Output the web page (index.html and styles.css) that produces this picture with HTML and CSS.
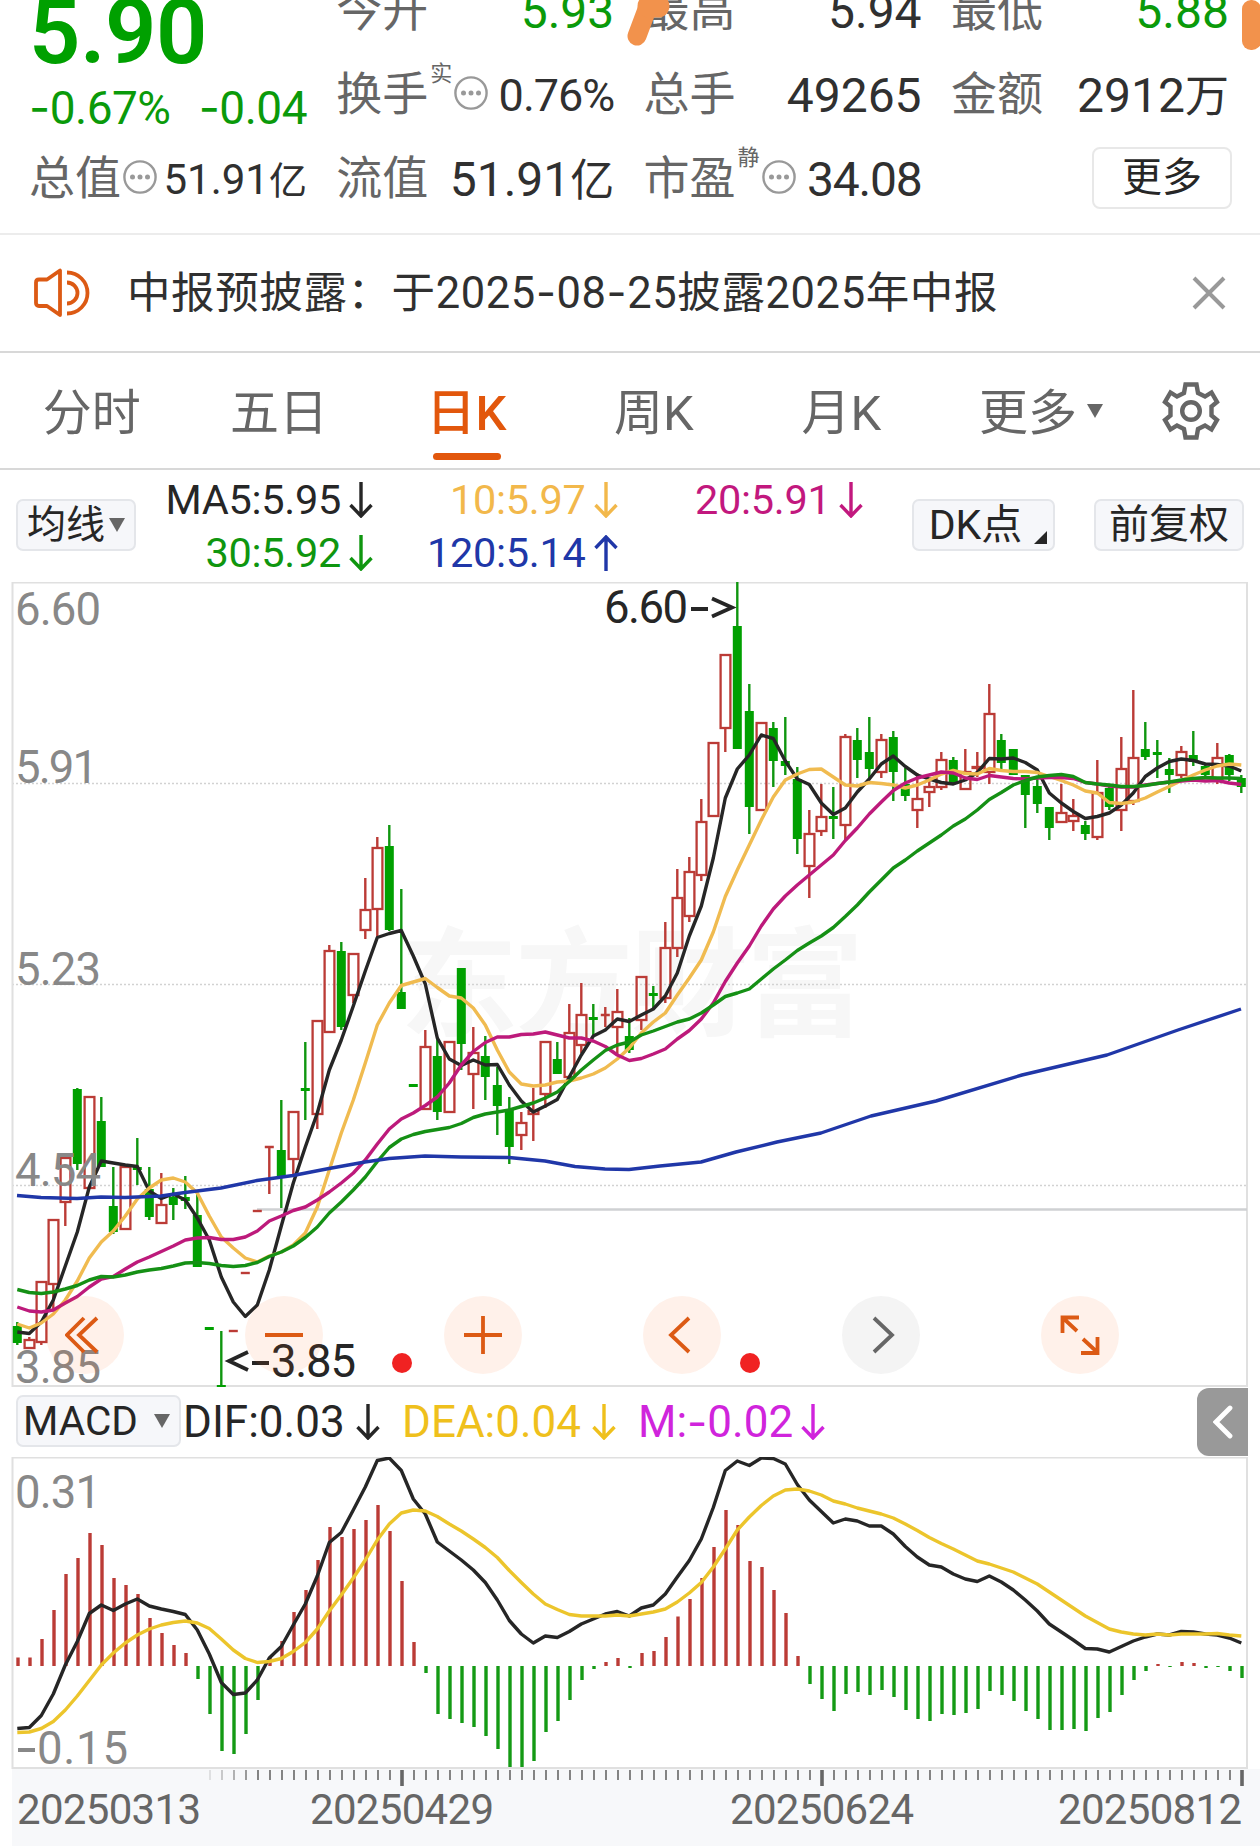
FILE: index.html
```html
<!DOCTYPE html>
<html lang="zh-CN">
<head>
    <meta charset="UTF-8">
    <title>日K行情</title>
    <link rel="stylesheet" href="styles.css">
</head>
<body>
    <svg class="symbols">
        <symbol id="dots" viewBox="0 0 34 34">
            <circle cx="17" cy="17" r="15.6" fill="none" stroke="#999" stroke-width="2.4"/>
            <circle cx="9.5" cy="17" r="2.5" fill="#999"/>
            <circle cx="17" cy="17" r="2.5" fill="#999"/>
            <circle cx="24.5" cy="17" r="2.5" fill="#999"/>
        </symbol>
        <symbol id="down" viewBox="0 0 24 36">
            <path d="M12 0V33M1.5 23L12 34L22.5 23" fill="none" stroke="currentColor" stroke-width="3.400"/>
        </symbol>
        <symbol id="up" viewBox="0 0 24 36">
            <path d="M12 36V3M1.5 13L12 2L22.5 13" fill="none" stroke="currentColor" stroke-width="3.400"/>
        </symbol>
    </svg>

    <!-- 行情 -->
    <div class="quote">
        <div class="price-box">
            <div class="price">5.90</div>
            <div class="change"><span><i class="dash">-</i>0.67%</span><span><i class="dash">-</i>0.04</span></div>
        </div>
        <div class="cell"><label>今开</label><b class="green">5.93</b></div>
        <div class="cell"><label>最高</label><b>5.94</b></div>
        <div class="cell"><label>最低</label><b class="green">5.88</b></div>
        <div class="cell"><label>换手</label><sup>实</sup><svg class="dots"><use href="#dots"/></svg><b class="mid">0.76%</b></div>
        <div class="cell"><label>总手</label><b>49265</b></div>
        <div class="cell"><label>金额</label><b>2912<em>万</em></b></div>
        <div class="cell"><label>总值</label><svg class="dots"><use href="#dots"/></svg><b class="small">51.91<em>亿</em></b></div>
        <div class="cell"><label>流值</label><b>51.91<em>亿</em></b></div>
        <div class="cell"><label>市盈</label><sup>静</sup><svg class="dots"><use href="#dots"/></svg><b class="pe">34.08</b></div>
        <div class="cell"><button class="more">更多</button></div>
        <svg class="marks" viewBox="0 0 1260 60">
            <path d="M637 36L649 4" stroke="#f2924c" stroke-width="19" stroke-linecap="round"/>
            <path d="M649 6H658" stroke="#f2924c" stroke-width="23" stroke-linecap="round"/>
            <rect x="1242" y="0" width="19" height="50" rx="9" fill="#f2924c"/>
        </svg>
    </div>

    <!-- 公告 -->
    <div class="notice">
        <svg class="speaker" viewBox="0 0 57 50" fill="none" stroke="#dc5a14" stroke-width="3.800">
            <path d="M6 11.500H14L27 2.500V47L14 38H6Q3 38 3 35V14.500Q3 11.500 6 11.500Z" stroke-linejoin="round"/>
            <path d="M34 14.500A10.500 10.500 0 0 1 34 35.500"/>
            <path d="M34 4.500A20.500 20.500 0 0 1 34 45.500"/>
        </svg>
        <span class="notice-text">中报预披露：于2025<i class="dash">-</i>08<i class="dash">-</i>25披露2025年中报</span>
        <svg class="close" viewBox="0 0 36 36"><path d="M3 3L33 33M33 3L3 33" stroke="#999" stroke-width="4"/></svg>
    </div>

    <!-- 周期 -->
    <div class="tabs">
        <div class="tab">分时</div>
        <div class="tab">五日</div>
        <div class="tab active">日K</div>
        <div class="tab">周K</div>
        <div class="tab">月K</div>
        <div class="tab tab-more">更多<span class="tri"></span></div>
        <svg class="gear" viewBox="-30 -30 60 60" fill="none" stroke="#666" stroke-width="4.400">
            <path d="M-5.500 -26.500H5.500L7 -18L14 -14.500L20.500 -18.500L26 -9L20.500 -4.500V4.500L26 9L20.500 18.500L14 14.500L7 18L5.500 26.500H-5.500L-7 18L-14 14.500L-20.500 18.500L-26 9L-20.500 4.500V-4.500L-26 -9L-20.500 -18.500L-14 -14.500L-7 -18Z"/>
            <circle r="8.800"/>
        </svg>
    </div>

    <!-- 均线 -->
    <div class="ma-bar">
        <button class="chip chip-ma">均线<span class="tri"></span></button>
        <div class="ma-list">
            <span class="c5">MA5:5.95<svg class="arrow"><use href="#down"/></svg></span>
            <span class="c10">10:5.97<svg class="arrow"><use href="#down"/></svg></span>
            <span class="c20">20:5.91<svg class="arrow"><use href="#down"/></svg></span>
            <span class="c30">30:5.92<svg class="arrow"><use href="#down"/></svg></span>
            <span class="c120">120:5.14<svg class="arrow"><use href="#up"/></svg></span>
        </div>
        <button class="chip chip-dk">DK点<span class="corner"></span></button>
        <button class="chip chip-fq">前复权</button>
    </div>

    <!-- K线 -->
    <div class="kline">
        <svg id="kline" viewBox="0 582 1260 805" width="1260" height="805">
            <text class="watermark" x="400" y="1027" textLength="464">东方财富</text>
            <g class="grid">
                <path d="M12 783.5H1247M12 984.500H1247M12 1185.500H1247"/>
            </g>
            <path class="frame" d="M12.500 582V1386H1247V582.500H12"/>
            <path d="M257 1209.500H1247" stroke="#cfd1d3" stroke-width="2.500"/>
            <g id="candles"></g>
            <g id="ma"></g>
            <g class="axis">
                <text x="15" y="625" textLength="86">6.60</text>
                <text x="15" y="783" textLength="83">5.91</text>
                <text x="15" y="985" textLength="86">5.23</text>
                <text x="15" y="1186" textLength="86">4.54</text>
                <text x="15" y="1383" textLength="86">3.85</text>
            </g>
            <g class="peak">
                <text x="604" y="623" textLength="84">6.60</text>
                <path d="M691 609H708M712 598.500L732 607.500L712 616.500"/>
                <text x="271" y="1377" textLength="85">3.85</text>
                <path d="M248 1352L229 1361L248 1370M252 1363H269"/>
            </g>
            <circle cx="402" cy="1363" r="10" fill="#f02222"/>
            <circle cx="750" cy="1363" r="10" fill="#f02222"/>
        </svg>
        <div class="tools">
            <span class="tool"><svg viewBox="-20 -20 40 40"><path d="M-1 -17L-18 0L-1 17M12 -17L-6 0L12 17"/></svg></span>
            <span class="tool"><svg viewBox="-20 -20 40 40"><path d="M-19 0H19"/></svg></span>
            <span class="tool"><svg viewBox="-20 -20 40 40"><path d="M-19 0H19M0 -19V19"/></svg></span>
            <span class="tool"><svg viewBox="-20 -20 40 40"><path d="M7 -17L-11 0L7 17"/></svg></span>
            <span class="tool off"><svg viewBox="-20 -20 40 40"><path d="M-7 -17L11 0L-7 17"/></svg></span>
            <span class="tool"><svg viewBox="-20 -20 40 40"><path d="M-17.500 -2V-17.500H-1M-17 -17L-3 -4M17.500 2V18H1M17 17L3 4"/></svg></span>
        </div>
    </div>

    <!-- MACD -->
    <div class="macd-bar">
        <button class="chip chip-macd">MACD<span class="tri"></span></button>
        <span class="dif">DIF:0.03<svg class="arrow"><use href="#down"/></svg></span>
        <span class="dea">DEA:0.04<svg class="arrow"><use href="#down"/></svg></span>
        <span class="m">M:<i class="dash">-</i>0.02<svg class="arrow"><use href="#down"/></svg></span>
        <div class="fold"><svg viewBox="0 0 20 32"><path d="M17 2L3 16L17 30"/></svg></div>
    </div>
    <svg id="macd" viewBox="0 1457 1260 389" width="1260" height="389">
        <rect x="12" y="1769" width="1248" height="77" fill="#f7f8fa"/>
        <path class="frame" d="M12.500 1457V1768H1247V1457.500H12"/>
        <g id="bars"></g>
        <g id="lines"></g>
        <g class="axis">
            <text x="15" y="1508" textLength="86">0.31</text>
            <path d="M18 1750H35" stroke="#888" stroke-width="4"/>
            <text x="37" y="1764" textLength="91">0.15</text>
        </g>
        <g id="ticks"></g>
        <g class="dates">
            <text x="17" y="1824" textLength="184">20250313</text>
            <text x="310" y="1824" textLength="184">20250429</text>
            <text x="730" y="1824" textLength="184">20250624</text>
            <text x="1058" y="1824" textLength="184">20250812</text>
        </g>
    </svg>

    <script src="chart.js"></script>
</body>
</html>
```

FILE: styles.css
```css
body {
    margin: 0;
    width: 1260px;
    height: 1846px;
    overflow: hidden;
    background: #fff;
    color: #303030;
    font-family: Roboto, "Noto Sans CJK SC", sans-serif;
}

button {
    font-family: inherit;
    color: #262626;
    padding: 0;
}

.symbols {
    display: none;
}

/* 横杠用更宽的字形 */
.dash {
    font-family: Inter, sans-serif;
    font-style: normal;
}

.green {
    color: #0a9a0a;
}

/* 行情 */
.quote {
    position: relative;
    box-sizing: border-box;
    height: 235px;
    padding: 0 31px 0 29px;
    border-bottom: 2px solid #ececec;
    overflow: hidden;
    display: grid;
    grid-template-columns: repeat(4, 278px);
    grid-template-rows: 54px 84px 84px;
    column-gap: 29.3px;
}

.price-box {
    grid-row: 1 / 3;
    color: #0a9a0a;
    display: flex;
    flex-direction: column;
    justify-content: flex-end;
}

.price {
    height: 88px;
    margin-top: -20px;
    line-height: 88px;
    font-size: 90px;
    font-weight: 600;
    color: #00a000;
    letter-spacing: -0.5px;
}

.change {
    height: 61px;
    line-height: 61px;
    display: flex;
    justify-content: space-between;
    font-size: 46px;
    letter-spacing: -0.5px;
}

.cell {
    display: flex;
    align-items: center;
    height: 84px;
    align-self: end;
    white-space: nowrap;
}

.cell label {
    font-size: 46px;
    line-height: 84px;
    color: #666;
    position: relative;
    top: -2px;
}

.cell sup {
    font-size: 22px;
    line-height: 24px;
    align-self: flex-start;
    margin: 8px 0 0 2px;
    color: #666;
}

.cell b {
    margin-left: auto;
    font-size: 48px;
    line-height: 84px;
    font-weight: 400;
}

.cell b em {
    font-style: normal;
    font-size: 44px;
}

.cell .mid {
    font-size: 45px;
    letter-spacing: -1px;
}

.cell .pe {
    letter-spacing: -1.2px;
}

.cell .small {
    font-size: 42px;
}

.cell .small em {
    font-size: 38px;
}

.dots {
    width: 34px;
    height: 34px;
    margin-left: 2px;
    position: relative;
    top: -3px;
}

.more {
    margin-left: auto;
    margin-right: -3px;
    width: 140px;
    height: 62px;
    position: relative;
    top: -2px;
    font-size: 40px;
    line-height: 54px;
    background: #fff;
    border: 2px solid #e8e8e8;
    border-radius: 8px;
}

.marks {
    position: absolute;
    left: 0;
    top: 0;
    width: 1260px;
    height: 60px;
}

/* 公告 */
.notice {
    box-sizing: border-box;
    height: 118px;
    padding: 0 33px;
    border-bottom: 2px solid #d8d8d8;
    display: flex;
    align-items: center;
}

.speaker {
    width: 57px;
    height: 50px;
}

.notice-text {
    margin-left: 37px;
    font-size: 43.5px;
    line-height: 100px;
    letter-spacing: 0.6px;
}

.close {
    width: 36px;
    height: 36px;
    margin-left: auto;
}

/* 周期 */
.tabs {
    box-sizing: border-box;
    height: 117px;
    border-bottom: 2px solid #d8d8d8;
    display: flex;
    align-items: center;
    color: #666;
}

.tab {
    position: relative;
    left: -2px;
    width: 187.4px;
    height: 115px;
    line-height: 121px;
    text-align: center;
    font-size: 49px;
}

.tab.active {
    color: #e2570c;
    font-weight: 500;
}

.tab.active::after {
    content: '';
    position: absolute;
    left: 60px;
    bottom: 8px;
    width: 68px;
    height: 7px;
    border-radius: 4px;
    background: #e2570c;
}

.tab-more {
    width: 212px;
}

.tri {
    display: inline-block;
    border: 8.5px solid transparent;
    border-top: 14px solid #666;
    border-bottom: 0;
    vertical-align: middle;
    position: relative;
    top: -3px;
}

.tab-more .tri {
    margin-left: 10px;
    top: -6px;
}

.gear {
    width: 60px;
    height: 60px;
    margin-left: 12px;
}

/* 均线 */
.ma-bar {
    height: 112px;
    padding: 0 16px;
    display: flex;
    align-items: center;
}

.chip {
    box-sizing: border-box;
    height: 52px;
    background: #f6f7fa;
    border: 2px solid #e4e6ea;
    border-radius: 7px;
    font-size: 39px;
    line-height: 46px;
    white-space: nowrap;
    position: relative;
    top: -1px;
    flex: none;
}

.chip-ma {
    width: 120px;
}

.chip-ma .tri {
    margin-left: 4px;
}

.ma-list {
    width: 728px;
    display: grid;
    grid-template-columns: 237px 244.5px 245px;
    grid-auto-rows: 53px;
    font-size: 41.5px;
    line-height: 53px;
}

.ma-list span {
    display: flex;
    justify-content: flex-end;
    align-items: center;
    letter-spacing: -0.3px;
}

.arrow {
    width: 24px;
    height: 36px;
    margin-left: 8px;
}

.c5 { color: #262626; }
.c10 { color: #f2b84b; }
.c20 { color: #c2187e; }
.c30 { color: #0f960f; }
.c120 { color: #2037a8; }

.chip-dk {
    width: 143px;
    margin-left: 48px;
    padding-right: 16px;
    font-size: 41px;
}

.corner {
    position: absolute;
    right: 6px;
    bottom: 5px;
    border-left: 13px solid transparent;
    border-bottom: 13px solid #262626;
}

.chip-fq {
    width: 150px;
    margin-left: auto;
    font-size: 40px;
}

/* K线 */
.kline {
    position: relative;
    height: 804px;
}

.kline > svg, #macd {
    display: block;
}

.frame {
    fill: none;
    stroke: #e0e0e0;
    stroke-width: 2;
}

.grid path {
    stroke: #d2d2d2;
    stroke-width: 1.3;
    stroke-dasharray: 2 2;
}

.watermark {
    font-size: 118px;
    font-weight: 700;
    fill: #f7f7f7;
}

.axis text {
    font-size: 45.5px;
    fill: #888;
}

.peak text {
    font-size: 45.5px;
    fill: #262626;
}

.peak path {
    fill: none;
    stroke: #262626;
    stroke-width: 3.8;
}

.dates text {
    font-size: 42px;
    fill: #666;
}

.tools {
    position: absolute;
    left: 46px;
    top: 714px;
    display: flex;
    gap: 121px;
}

.tool {
    width: 78px;
    height: 78px;
    border-radius: 50%;
    background: rgba(250, 100, 20, 0.09);
    display: flex;
    align-items: center;
    justify-content: center;
}

.tool svg {
    width: 40px;
    height: 40px;
    fill: none;
    stroke: #dc5a14;
    stroke-width: 3.8;
}

.tool.off {
    background: rgba(60, 60, 60, 0.06);
}

.tool.off svg {
    stroke: #666;
}

/* MACD */
.macd-bar {
    height: 71px;
    padding-left: 16px;
    display: flex;
    align-items: center;
    font-size: 44px;
}

.macd-bar > span {
    display: flex;
    align-items: center;
    line-height: 60px;
}

.chip-macd {
    width: 165px;
    font-size: 40.5px;
    padding-right: 4px;
}

.chip-macd .tri {
    margin-left: 16px;
}

.dif { margin-left: 2px; width: 219px; color: #262626; }
.dea { width: 236px; color: #efc01c; }
.m { color: #d024dc; }

.macd-bar .arrow {
    margin-left: 11px;
}

.macd-bar .m .arrow {
    margin-left: 8px;
}

.fold {
    width: 51px;
    height: 68px;
    margin-left: auto;
    margin-right: 12px;
    border-radius: 12px 0 0 12px;
    background: #999;
    display: flex;
    align-items: center;
    justify-content: center;
}

.fold svg {
    width: 20px;
    height: 34px;
    fill: none;
    stroke: #fff;
    stroke-width: 4.8;
    stroke-linecap: round;
}
```

FILE: chart.js
```js
const RED = '#bb3b36';
const GREEN = '#00a000';
const X0 = 17.3;
const STEP = 12;
const ZERO = 1666;

// 涨跌, 最高, 实体上沿, 实体下沿, 最低
const candles = [
    ['g', 1322, 1326, 1343, 1345], ['r', 1337, 1339, 1349, 1349], ['r', 1281, 1281, 1343, 1345],
    ['r', 1219, 1219, 1285, 1310], ['r', 1157, 1157, 1203, 1226], ['g', 1088, 1089, 1164, 1170],
    ['r', 1096, 1096, 1189, 1189], ['g', 1097, 1121, 1167, 1167], ['g', 1167, 1206, 1232, 1234],
    ['r', 1166, 1166, 1230, 1230], ['g', 1138, 1167, 1170, 1185], ['g', 1167, 1189, 1217, 1220],
    ['r', 1173, 1204, 1224, 1224], ['g', 1188, 1197, 1205, 1220], ['g', 1176, 1197, 1201, 1209],
    ['g', 1193, 1215, 1267, 1267], ['g', 1328, 1327, 1330, 1329], ['g', 1331, 1385, 1387, 1386],
    ['r', 1331, 1331, 1331, 1331], ['r', 1273, 1273, 1273, 1273], ['r', 1211, 1211, 1211, 1211],
    ['r', 1147, 1147, 1147, 1194], ['g', 1100, 1150, 1177, 1208], ['r', 1111, 1111, 1160, 1176],
    ['g', 1042, 1088, 1091, 1120], ['r', 1020, 1020, 1115, 1129], ['r', 945, 950, 1033, 1033],
    ['g', 942, 951, 1027, 1030], ['r', 953, 953, 996, 1003], ['r', 878, 909, 931, 939],
    ['r', 837, 847, 910, 938], ['g', 825, 846, 930, 931], ['g', 889, 992, 1009, 1009],
    ['g', 1085, 1084, 1087, 1086], ['r', 1030, 1046, 1110, 1110], ['g', 1037, 1056, 1112, 1120],
    ['r', 1041, 1041, 1113, 1113], ['g', 968, 968, 1044, 1070], ['r', 1027, 1052, 1075, 1109],
    ['g', 1036, 1056, 1077, 1100], ['g', 1067, 1085, 1106, 1135], ['g', 1097, 1109, 1147, 1164],
    ['r', 1112, 1122, 1136, 1150], ['r', 1088, 1110, 1115, 1141], ['r', 1041, 1041, 1095, 1108],
    ['g', 1042, 1059, 1074, 1074], ['r', 1004, 1032, 1078, 1079], ['r', 983, 1014, 1046, 1053],
    ['g', 1004, 1017, 1020, 1036], ['r', 1007, 1015, 1015, 1027], ['r', 989, 1011, 1028, 1054],
    ['g', 1018, 1036, 1050, 1053], ['r', 976, 976, 1021, 1030], ['g', 986, 993, 996, 1010],
    ['r', 922, 947, 999, 1003], ['r', 869, 897, 949, 957], ['r', 857, 871, 917, 922],
    ['r', 799, 821, 876, 881], ['r', 742, 742, 817, 817], ['r', 654, 654, 729, 752],
    ['g', 582, 626, 749, 749], ['g', 684, 711, 807, 834], ['r', 722, 722, 811, 811],
    ['g', 722, 728, 761, 787], ['g', 717, 761, 766, 775], ['g', 767, 779, 839, 854],
    ['r', 810, 833, 867, 898], ['r', 784, 816, 832, 836], ['g', 787, 816, 819, 839],
    ['r', 734, 736, 826, 840], ['g', 728, 740, 760, 778], ['g', 717, 752, 769, 778],
    ['r', 734, 739, 773, 778], ['g', 731, 737, 772, 801], ['g', 768, 784, 796, 801],
    ['r', 773, 798, 811, 828], ['r', 778, 786, 793, 807], ['r', 752, 759, 788, 790],
    ['g', 757, 760, 782, 785], ['r', 749, 771, 790, 790], ['r', 752, 766, 769, 777],
    ['r', 684, 713, 773, 784], ['g', 734, 740, 763, 771], ['g', 749, 749, 775, 775],
    ['g', 775, 775, 795, 828], ['g', 777, 786, 804, 813], ['g', 807, 807, 828, 840],
    ['r', 784, 812, 823, 823], ['r', 799, 815, 822, 831], ['g', 821, 825, 834, 840],
    ['r', 760, 792, 838, 840], ['g', 787, 788, 807, 810], ['r', 737, 768, 811, 831],
    ['r', 690, 757, 802, 805], ['g', 722, 749, 757, 760], ['g', 740, 752, 755, 778],
    ['g', 758, 769, 775, 793], ['r', 746, 751, 776, 778], ['g', 731, 755, 762, 766],
    ['g', 764, 766, 775, 777], ['r', 743, 757, 780, 784], ['g', 754, 755, 775, 781],
    ['g', 775, 778, 787, 793]
];

const ma5 = [1332, 1333.5, 1322, 1300, 1266, 1232, 1187, 1161, 1163, 1165, 1166.5, 1191, 1198.5, 1194, 1200, 1218, 1240, 1277, 1302, 1316.5, 1305, 1270, 1226, 1183, 1147, 1113, 1070, 1040, 1006, 971, 937.5, 933.5, 930.5, 956, 984, 1038, 1059, 1065.5, 1060, 1065, 1064.5, 1085, 1101, 1112, 1106, 1099.5, 1077, 1055, 1036, 1030, 1019, 1021.5, 1015, 1009, 996, 973, 936, 906, 858, 798, 769, 755, 735, 738.5, 761, 779, 784.5, 803, 814.5, 808, 792, 779, 764, 756, 766.5, 775, 779, 782.5, 784, 780, 772.5, 758.5, 759, 758, 762.5, 770, 793, 803, 811.5, 818.5, 816.5, 813, 805, 793, 776.5, 768, 761.5, 759, 760.5, 764, 764.5, 766, 771];
const ma10 = [1324, 1328, 1323, 1314, 1300, 1281, 1258, 1242, 1231, 1216, 1199, 1188, 1180, 1178, 1182, 1193, 1216, 1237, 1248, 1258, 1262, 1256, 1252, 1245, 1233, 1207, 1170, 1133, 1100, 1063, 1025, 1003, 985.5, 982, 978.5, 987.5, 996, 998, 1008, 1025, 1050, 1072, 1084, 1086, 1085, 1082, 1081, 1078, 1074, 1068, 1059, 1048, 1033, 1022, 1013, 995, 978, 960, 932, 896.5, 870, 845, 820, 797, 780, 774, 769.5, 769, 777, 785, 786, 782.5, 783.5, 785, 788, 785, 780, 774, 770.5, 773.5, 774, 768.5, 770.5, 771.5, 771.5, 772.5, 776.5, 780.5, 785, 791, 793, 802.5, 803.5, 802, 798, 792, 786.5, 780.5, 775, 770, 766, 764, 765];
const ma20 = [1307, 1311, 1312, 1310, 1303, 1296.5, 1287, 1279, 1276.5, 1269, 1262, 1257, 1251.5, 1246, 1240, 1238, 1237.5, 1239.5, 1239.5, 1237, 1231, 1221, 1216, 1210.5, 1207, 1200, 1192, 1183, 1173, 1160, 1144, 1129, 1119, 1113, 1105.5, 1097, 1083, 1065, 1051.5, 1042.5, 1037, 1037, 1034.5, 1034, 1032, 1035, 1038, 1038, 1041, 1046.5, 1055, 1060.5, 1058.5, 1054, 1049, 1039, 1030.5, 1019, 1003, 981.5, 963, 946, 926, 909, 896, 885, 875, 865, 855, 840.5, 828, 814, 802, 790.5, 783, 778, 775, 772, 773, 778, 779.5, 775.5, 777, 778.5, 779, 778, 777.5, 777.5, 778.5, 782.5, 784, 786, 787, 787, 785, 783.5, 782, 781, 780, 781, 780.5, 783, 784.5];
const ma30 = [1289.5, 1292.5, 1293.5, 1292, 1289, 1285.5, 1280, 1276.5, 1277, 1275, 1272, 1270, 1268.5, 1266, 1263, 1262.5, 1263.5, 1265.5, 1266.5, 1265.5, 1262.5, 1256.5, 1252, 1246, 1237.5, 1227, 1213, 1202, 1190, 1177, 1161.5, 1147.5, 1139, 1134.5, 1131.5, 1129.5, 1127.5, 1123.5, 1117.5, 1114, 1112, 1110, 1106.5, 1103, 1098, 1092, 1081.5, 1070, 1060, 1050.5, 1045, 1042, 1035, 1031, 1026.5, 1022, 1019, 1013, 1005, 996.5, 993, 989, 979, 969, 960, 950.5, 943, 936, 927.5, 916.5, 905, 892, 880, 868, 860, 851, 843, 835, 826, 819, 810, 799.5, 792.5, 785, 780.5, 777, 775.5, 774.5, 776.5, 782.5, 784, 785, 786.5, 786.5, 785.5, 783.5, 782, 780, 778.5, 777.5, 778, 778, 778.5];
const ma120 = '17,1195.5 41,1197.5 77,1198.5 101,1197 125,1197.5 161,1196 185,1192.5 221,1188 257,1180.5 293,1175.5 329,1168.5 365,1162 389,1158.5 425,1156 461,1157 509,1157.5 545,1161 575,1166.5 605,1169 629,1169.5 660,1166 701,1162 736,1152 777,1142 821,1133 871,1116 936,1101 1022,1075 1107,1055 1178,1030 1241,1009';

const hist = [1657.5, 1657.5, 1639, 1610, 1574, 1558, 1533, 1545, 1578, 1585, 1594, 1618, 1633, 1645, 1653, 1679, 1714, 1751, 1754, 1734, 1700, 1657.5, 1641, 1612, 1590, 1560, 1527, 1537, 1529, 1520, 1505, 1531, 1581, 1642, 1673, 1714, 1719, 1723, 1727, 1736, 1749, 1767, 1767, 1761, 1732, 1721, 1700, 1680, 1669, 1662, 1658, 1668, 1653, 1651, 1637, 1616.5, 1599, 1578, 1547, 1510, 1525, 1561, 1567, 1590, 1613, 1656, 1684, 1699, 1711, 1694, 1692, 1695, 1690, 1697, 1710, 1719, 1721, 1714, 1715, 1713, 1709, 1691, 1695, 1701, 1711, 1719, 1730, 1730, 1729, 1731, 1718, 1712, 1695, 1680, 1671, 1664, 1667, 1662, 1663, 1668, 1667, 1671, 1678];
const dif = [1728.5, 1727.5, 1715.5, 1694, 1665, 1641.5, 1613.5, 1605, 1610.5, 1604, 1599, 1606, 1609, 1611.5, 1614.5, 1630, 1654, 1682.5, 1694.5, 1693, 1680, 1658, 1646.5, 1625, 1604, 1576, 1542.5, 1532.5, 1510, 1487, 1460.5, 1458, 1470.5, 1499, 1514, 1542, 1551, 1560, 1570, 1582.5, 1600, 1620.5, 1634, 1643, 1636, 1637.5, 1631.5, 1624, 1619, 1614, 1611.5, 1616, 1608, 1605, 1594, 1577, 1560.5, 1539, 1507.5, 1470.5, 1461, 1465.5, 1458, 1458.5, 1464, 1484.5, 1500, 1511.5, 1523, 1519, 1521, 1526, 1526, 1534, 1546.5, 1557, 1565, 1567, 1574, 1579, 1581.5, 1576, 1582, 1590, 1600, 1611, 1624, 1632, 1640, 1648.5, 1649, 1652, 1646.5, 1641, 1637, 1634, 1635, 1631.5, 1632, 1634, 1635, 1638, 1643];
const dea = [1732.5, 1732, 1728.5, 1721.5, 1710, 1696, 1680.5, 1665, 1653, 1643, 1635, 1629, 1625, 1622.5, 1621, 1623, 1628.5, 1639, 1650, 1658.5, 1662.5, 1661.5, 1658.5, 1651.5, 1642.5, 1629, 1611, 1595, 1578, 1560, 1540, 1524, 1513, 1510, 1511, 1516.5, 1524, 1531, 1539, 1547.5, 1557.5, 1570.5, 1582.5, 1594, 1604, 1609.5, 1614.5, 1616, 1616, 1616, 1615, 1616, 1614, 1612, 1609, 1602, 1593, 1582.5, 1567, 1549, 1530, 1517, 1505.5, 1496, 1490, 1489, 1491, 1495, 1501, 1504, 1508, 1511, 1514, 1518, 1524, 1530.5, 1537.5, 1543.5, 1549, 1555, 1561, 1564, 1568, 1572, 1578, 1584, 1592, 1600, 1608, 1616, 1622.5, 1629, 1632, 1634, 1635, 1634, 1635, 1634, 1634, 1634, 1633.5, 1635, 1636];

function x(i) {
    return +(X0 + i * STEP).toFixed(1);
}

function line(ys, color, width) {
    const pts = typeof ys === 'string' ? ys : ys.map((y, i) => x(i) + ',' + y).join(' ');
    return `<polyline points="${pts}" fill="none" stroke="${color}" stroke-width="${width}" stroke-linejoin="round"/>`;
}

function candle([type, high, top, bottom, low], i) {
    const cx = x(i);
    if (type === 'g') {
        return `<path d="M${cx} ${high}V${low}" stroke="#0f960f" stroke-width="2.4"/>` +
            `<rect x="${cx - 4.5}" y="${top}" width="9" height="${bottom - top}" fill="${GREEN}"/>`;
    }
    // 一字或T字
    if (top === bottom) {
        return `<path d="M${cx - 4.5} ${top}H${cx + 4.5}M${cx} ${high}V${low}" stroke="${RED}" stroke-width="2.4"/>`;
    }
    return `<path d="M${cx} ${high}V${top}M${cx} ${bottom}V${low}" stroke="${RED}" stroke-width="2.4"/>` +
        `<rect x="${cx - 4.7}" y="${top + 1}" width="9.8" height="${bottom - top - 2}" fill="none" stroke="${RED}" stroke-width="2.3"/>`;
}

document.getElementById('candles').innerHTML = candles.map(candle).join('');
document.getElementById('ma').innerHTML =
    line(ma5, '#262626', 3.4) +
    line(ma10, '#f0bb50', 3.4) +
    line(ma20, '#bd1a7b', 3.4) +
    line(ma30, '#159015', 3.4) +
    line(ma120, '#2037a8', 3.4);

document.getElementById('bars').innerHTML = hist.map((y, i) =>
    `<path d="M${x(i) + 0.7} ${ZERO}V${y}" stroke="${y < ZERO ? '#bb3b36' : '#149a14'}" stroke-width="3.4"/>`
).join('');
document.getElementById('lines').innerHTML = line(dif, '#262626', 3.4) + line(dea, '#ecc52c', 3.4);

// 时间轴刻度
let ticks = '';
for (let i = 16; i <= 102; i++) {
    const major = i === 32 || i === 67 || i === 102;
    ticks += `<path d="M${x(i) + 0.7} 1770V${major ? 1786 : 1780}" stroke="#666" stroke-width="${major ? 3.6 : 1.6}" opacity="${Math.min(1, (i - 15) / 5)}"/>`;
}
document.getElementById('ticks').innerHTML = ticks;
```
